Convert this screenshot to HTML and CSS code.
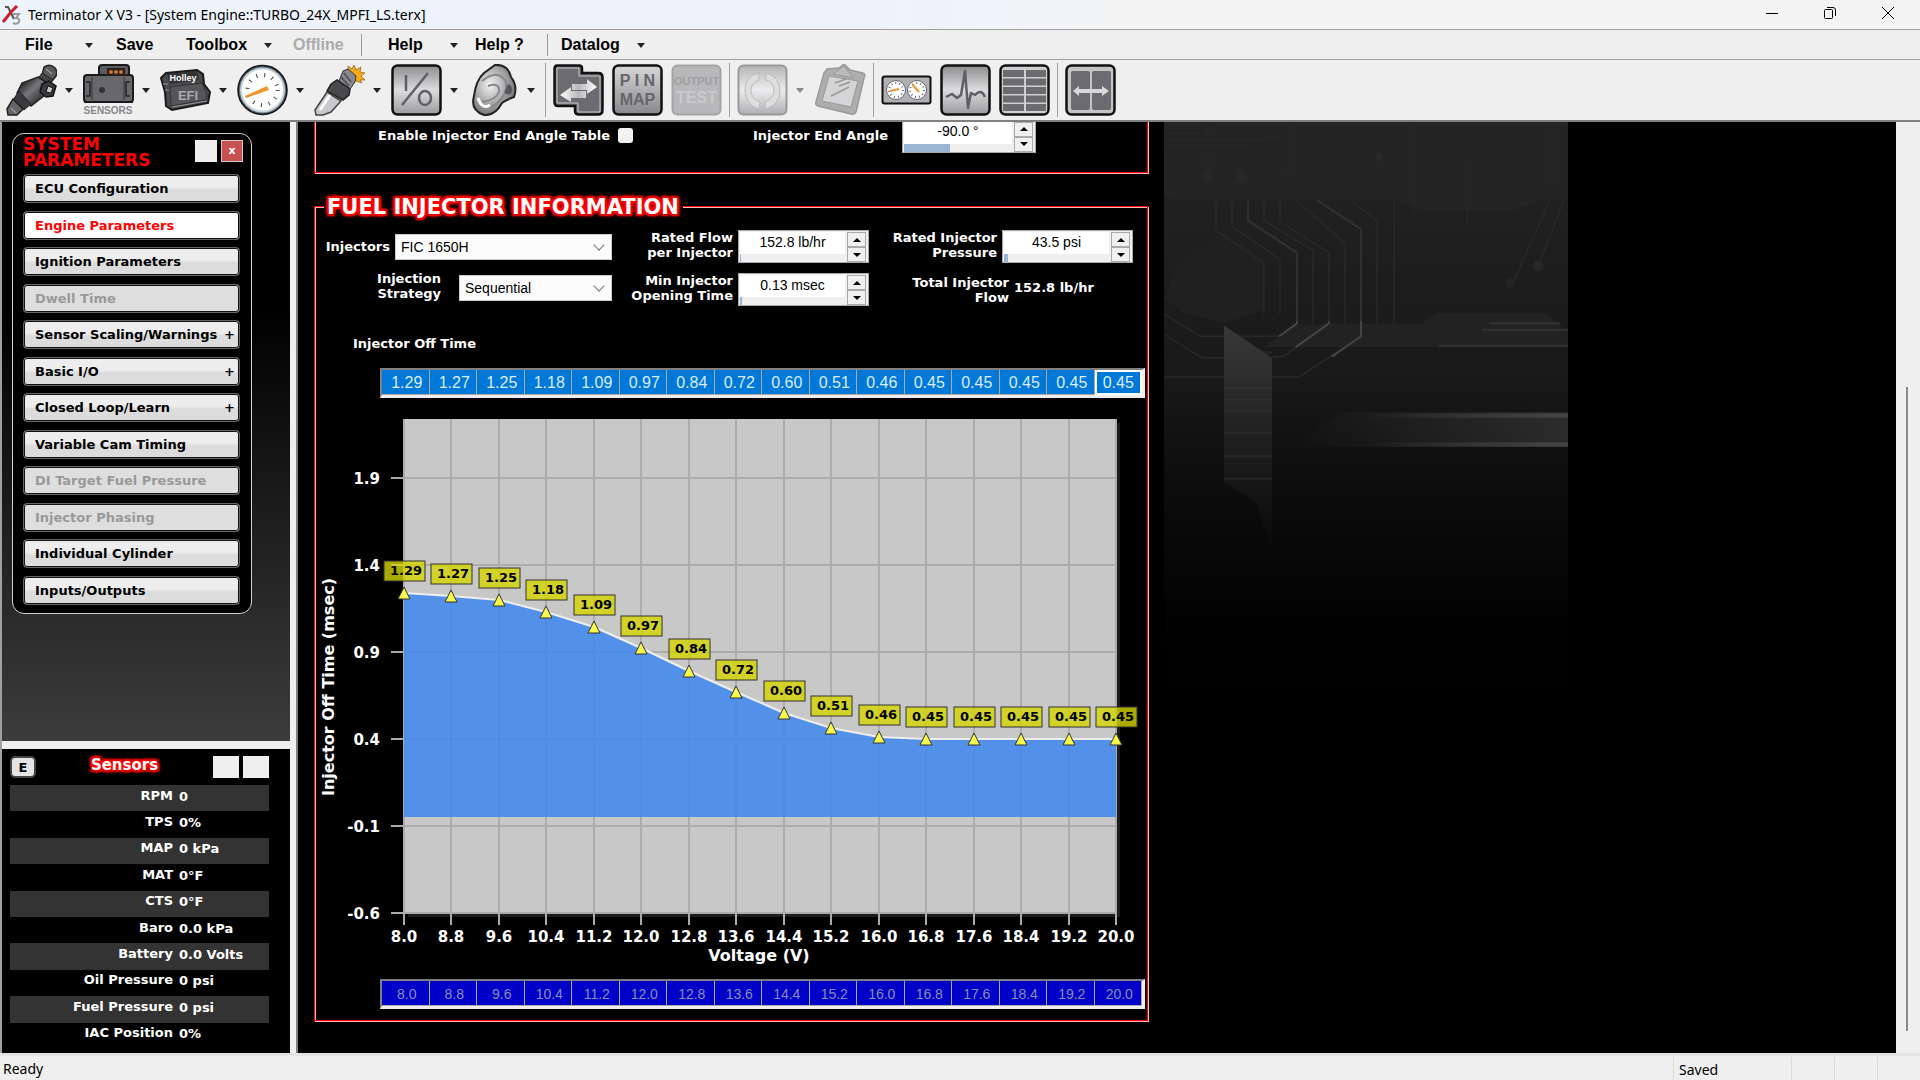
FILE: index.html
```html
<!DOCTYPE html>
<html lang="en">
<head>
    <meta charset="UTF-8">
    <meta name="viewport" content="width=device-width, initial-scale=1.0">
    <title>Terminator X V3</title>
    <link rel="stylesheet" href="styles.css">
</head>
<body>
    <header class="titlebar">
        <svg class="app-icon" width="20" height="20" viewBox="0 0 20 20">
            <path d="M3 2 L6 2 L12 14" fill="none" stroke="#555" stroke-width="2"/>
            <path d="M15 1 L9 7 L1 17" fill="none" stroke="#c8202c" stroke-width="3"/>
            <path d="M11 9 h6 l-3 4 q4 0 3 4 q-2 3 -6 1" fill="none" stroke="#999" stroke-width="2"/>
        </svg>
        <h1>Terminator X V3 - [System Engine::TURBO_24X_MPFI_LS.terx]</h1>
        <div class="window-buttons">
            <button aria-label="Minimize"><svg width="14" height="14" viewBox="0 0 14 14"><path d="M1 7.500H13"/></svg></button>
            <button aria-label="Restore"><svg width="14" height="14" viewBox="0 0 14 14"><rect x="1.500" y="3.500" width="8" height="9" rx="1"/><path d="M4 1.500h6q2.500 0 2.500 2.500v6"/></svg></button>
            <button aria-label="Close"><svg width="14" height="14" viewBox="0 0 14 14"><path d="M1 1L13 13M13 1L1 13"/></svg></button>
        </div>
    </header>

    <nav class="menubar">
        <button class="menu menu-file">File <i class="caret"></i></button>
        <button class="menu menu-save">Save</button>
        <button class="menu menu-toolbox">Toolbox <i class="caret"></i></button>
        <button class="menu menu-offline" disabled>Offline</button>
        <span class="menu-sep"></span>
        <button class="menu menu-help">Help <i class="caret"></i></button>
        <button class="menu menu-help2">Help ?</button>
        <span class="menu-sep"></span>
        <button class="menu menu-datalog">Datalog <i class="caret"></i></button>
    </nav>

    <!-- shared gradients for the toolbar icons -->
    <svg class="defs" width="0" height="0">
        <defs>
            <linearGradient id="metal" x1="0" y1="0" x2="0" y2="1">
                <stop offset="0" stop-color="#8c8c8e"/><stop offset=".5" stop-color="#dcdcde"/><stop offset="1" stop-color="#9a9a9e"/>
            </linearGradient>
            <linearGradient id="metal-down" x1="0" y1="0" x2="0" y2="1">
                <stop offset="0" stop-color="#d8d8da"/><stop offset="1" stop-color="#88888c"/>
            </linearGradient>
            <linearGradient id="faded" x1="0" y1="0" x2="0" y2="1">
                <stop offset="0" stop-color="#b4b4b6"/><stop offset=".5" stop-color="#ececee"/><stop offset="1" stop-color="#b0b0b4"/>
            </linearGradient>
            <linearGradient id="arrow-light" x1="0" y1="0" x2="1" y2="0">
                <stop offset="0" stop-color="#ffffff"/><stop offset=".5" stop-color="#b8b8ba"/><stop offset="1" stop-color="#ffffff"/>
            </linearGradient>
            <linearGradient id="tube" x1="0" y1="0" x2="1" y2="1">
                <stop offset=".2" stop-color="#2e2e30"/><stop offset=".45" stop-color="#77777b"/><stop offset=".8" stop-color="#2c2c2e"/>
            </linearGradient>
            <radialGradient id="ear" cx=".4" cy=".4" r=".6">
                <stop offset="0" stop-color="#f4f4f4"/><stop offset="1" stop-color="#77777a"/>
            </radialGradient>
        </defs>
    </svg>

    <div class="toolbar">
        <button class="tool dropdown" aria-label="Injector">
            <svg width="51" height="52" viewBox="0 0 51 52">
                <path d="M38 3 Q44 -1 49 4 Q52 8 50 12 L46 17 L36 12 Z" fill="#5a5a5e" stroke="#222" stroke-width="1.500"/>
                <path d="M36 9 L47 16 L42 22 L31 16 Z" fill="#444" stroke="#222"/>
                <path d="M32 13 L43 20 L39 31 L25 42 L11 29 L16 19 Z" fill="url(#tube)" stroke="#222" stroke-width="1.500"/>
                <path d="M13 27 L25 40 L18 46 L7 36 Z" fill="#3a3a3c" stroke="#222"/>
                <path d="M7 35 L17 45 L11 51 L2 51 L1 45 Z" fill="#66666a" stroke="#222" stroke-width="1.500"/>
                <path d="M36 20 L43 17 L50 22 L47 32 L40 33 L34 28 Z" fill="#3a3a3c" stroke="#111" stroke-width="1.500"/>
                <path d="M42 22 L47 24 L45 29 L40 28 Z" fill="#c8c8cc" stroke="#111"/>
                <path d="M40 5 L46 10 M5 44 L10 49" stroke="#9a9a9e" stroke-width="1.500"/>
            </svg>
            <i class="caret"></i>
        </button>
        <button class="tool dropdown" aria-label="Sensors">
            <svg width="51" height="52" viewBox="0 0 51 52">
                <path d="M2 12 h14 v-8 q0 -3 3 -3 h24 q3 0 3 3 v8 h3 v26 h-47 z" fill="#5c5c60" stroke="#1a1a1a" stroke-width="2"/>
                <rect x="1" y="11" width="49" height="27" rx="3" fill="#68686c" stroke="#1a1a1a" stroke-width="2"/>
                <rect x="24" y="4" width="18" height="8" fill="#2a2018"/>
                <circle cx="28" cy="8" r="2" fill="#c8723c"/><circle cx="33" cy="8" r="2" fill="#c8723c"/><circle cx="38" cy="8" r="2" fill="#c8723c"/>
                <path d="M3 18 h4 v14 h-4 M47 18 h-4 v14 h4" fill="none" stroke="#222" stroke-width="1.500"/>
                <path d="M9 13 V36 M41 13 V36" stroke="#45454a" stroke-width="1.500"/>
                <circle cx="19" cy="26" r="3" fill="#333"/>
                <text x="25" y="50" class="ico-sensors">SENSORS</text>
            </svg>
            <i class="caret"></i>
        </button>
        <button class="tool dropdown" aria-label="EFI">
            <svg width="51" height="52" viewBox="0 0 51 52">
                <path d="M1 14 L6 9 L37 6 L43 10 L44 20 L50 28 L48 39 L12 46 L6 42 L5 28 Z" fill="#4a4a4e" stroke="#1a1a1a" stroke-width="2"/>
                <path d="M7 10 L37 7 L39 16 L10 20 Z" fill="#333"/>
                <text x="23" y="17" class="ico-brand">Holley</text>
                <path d="M10 23 L42 19 L47 30 L46 36 L11 42 Z" fill="#55555a" stroke="#333"/>
                <text x="28" y="36" class="ico-efi">EFI</text>
                <path d="M3 20 L8 20 M5 26 L9 26 M12 43 L47 37" stroke="#999" stroke-width="1"/>
            </svg>
            <i class="caret"></i>
        </button>
        <button class="tool dropdown" aria-label="Gauges">
            <svg width="51" height="52" viewBox="0 0 51 52">
                <circle cx="25.500" cy="26" r="24.500" fill="#5a6670" stroke="#111" stroke-width="1.500"/>
                <circle cx="25.500" cy="26" r="21.500" fill="#fff" stroke="#c8d4dc" stroke-width="2"/>
                <circle cx="25.500" cy="26" r="15" fill="none" stroke="#444" stroke-width="4" stroke-dasharray="1 7"/>
                <path d="M8 32 L30 22 L32 26 L9 34 Z" fill="#f0962c"/>
            </svg>
            <i class="caret"></i>
        </button>
        <button class="tool dropdown" aria-label="Ignition">
            <svg width="51" height="52" viewBox="0 0 51 52">
                <path d="M34 2 L38 5 L40 1 L42 6 L47 3 L46 8 L51 9 L47 12 L51 16 L46 16 L48 19 L42 17 L34 12 Z" fill="#f5a81c" stroke="#8a6010" stroke-width=".7"/>
                <path d="M29 7 L34 5 L42 12 L41 18 L36 25 L25 17 Z" fill="#8a8a8e" stroke="#333"/>
                <path d="M30 9 L37 18 M27 13 L35 22" stroke="#55555a" stroke-width="2"/>
                <path d="M17 20 L23 16 L36 25 L35 31 L29 36 L13 27 Z" fill="#4a4a4e" stroke="#222" stroke-width="1.500"/>
                <path d="M13 28 L27 37 L17 48 L9 51 L2 51 L1 46 Z" fill="#c8c8cc" stroke="#444" stroke-width="1.500"/>
                <path d="M16 31 L6 46" stroke="#fff" stroke-width="3"/>
            </svg>
            <i class="caret"></i>
        </button>
        <button class="tool dropdown" aria-label="I/O">
            <svg width="51" height="52" viewBox="0 0 51 52">
                <rect x="1.500" y="1.500" width="48" height="49" rx="5" fill="url(#metal)" stroke="#111" stroke-width="2.500"/>
                <path d="M15 11 V27 M37 9 L11 41" stroke="#606064" stroke-width="2.500"/>
                <ellipse cx="34" cy="34" rx="6" ry="7" fill="none" stroke="#606064" stroke-width="2.500"/>
            </svg>
            <i class="caret"></i>
        </button>
        <button class="tool dropdown" aria-label="Knock">
            <svg width="51" height="52" viewBox="0 0 51 52">
                <g transform="translate(2 0)">
                    <path d="M25 1 Q38 0 41 13 Q48 22 44 33 Q36 36 32 39 Q25 52 14 51 Q0 46 4 32 Q6 16 14 9 Z" fill="url(#ear)" stroke="#222" stroke-width="2"/>
                    <path d="M12 17 Q28 4 36 18 Q38 34 20 44 M18 22 Q30 18 29 28 Q26 36 12 38" fill="none" stroke="#88888c" stroke-width="2"/>
                    <path d="M38 20 q6 2 3 10 q-7 1 -6 -3 z" fill="#55555a"/>
                    <path d="M8 34 Q12 46 20 41" fill="none" stroke="#fff" stroke-width="3"/>
                </g>
            </svg>
            <i class="caret"></i>
        </button>
        <span class="sep"></span>
        <button class="tool" aria-label="Transfer">
            <svg width="51" height="52" viewBox="0 0 51 52">
                <path d="M4 1.500 H26 Q29 1.500 29 4 V9 H45 Q49.500 9 49.500 13 V46 Q49.500 50.500 45 50.500 H26 Q22 50.500 22 47 V42 H5 Q1.500 42 1.500 38 V5 Q1.500 1.500 4 1.500 Z" fill="#6c6c70" stroke="#111" stroke-width="2.500"/>
                <path d="M4 4 H26 V12 H47 V48 H25 V39 H4 Z" fill="none" stroke="#c8c8ca"/>
                <path d="M19 20 H34 V15 L44 23 L34 30 V26 H19 Z M33 27 H18 V23 L7 31 L18 38 V34 H33 Z" fill="url(#arrow-light)"/>
            </svg>
        </button>
        <button class="tool" aria-label="Pin Map">
            <svg width="51" height="52" viewBox="0 0 51 52">
                <rect x="1.500" y="1.500" width="48" height="49" rx="5" fill="url(#metal-down)" stroke="#111" stroke-width="2.500"/>
                <text x="25.500" y="22" class="ico-pin">P I N</text>
                <text x="25.500" y="41" class="ico-pin">MAP</text>
            </svg>
        </button>
        <button class="tool" aria-label="Output Test" disabled>
            <svg width="51" height="52" viewBox="0 0 51 52">
                <rect x="1.500" y="1.500" width="48" height="49" rx="5" fill="#b8b8ba" stroke="#a4a4a4" stroke-width="2"/>
                <text x="25.500" y="21" class="ico-output">OUTPUT</text>
                <text x="25.500" y="39" class="ico-test">TEST</text>
            </svg>
        </button>
        <span class="sep"></span>
        <button class="tool dropdown" aria-label="Sync" disabled>
            <svg width="51" height="52" viewBox="0 0 51 52">
                <rect x="1.500" y="1.500" width="48" height="49" rx="5" fill="url(#faded)" stroke="#999" stroke-width="2"/>
                <path d="M22 9 Q7 13 8 27 Q9 41 22 45 L23 38 Q14 34 14 27 Q14 18 22 16 Z M29 9 Q43 13 43 27 Q43 40 29 45 L28 38 Q37 34 37 27 Q37 18 29 16 Z" fill="#dededf" stroke="#bbb"/>
            </svg>
            <i class="caret"></i>
        </button>
        <button class="tool" aria-label="Clipboard" disabled>
            <svg width="51" height="52" viewBox="0 0 51 52">
                <path d="M12 5 L24 4 L29 0 L35 6 L48 9 Q51 10 49 14 L41 48 Q39 51 36 50 L3 42 Q0 41 1 38 L9 9 Z" fill="#adadaf" stroke="#999" stroke-width="1.500"/>
                <path d="M14 12 L43 17 L36 43 L7 37 Z" fill="#d4d4d6" stroke="#999"/>
                <path d="M18 10 L29 2 L38 14 Z" fill="#bbb" stroke="#999"/>
                <path d="M20 19 L31 15 M24 22 L35 18 M16 32 L34 23" stroke="#999" stroke-width="1.500"/>
            </svg>
        </button>
        <span class="sep"></span>
        <button class="tool" aria-label="Dash">
            <svg width="51" height="52" viewBox="0 0 51 52">
                <rect x="1.500" y="12.500" width="48" height="27" rx="2" fill="#b0b0b2" stroke="#111" stroke-width="2"/>
                <circle cx="15" cy="26" r="9.500" fill="#fff" stroke="#667"/><circle cx="36" cy="26" r="9.500" fill="#fff" stroke="#667"/>
                <circle cx="15" cy="26" r="7" fill="none" stroke="#666" stroke-width="2" stroke-dasharray="1 3"/>
                <circle cx="36" cy="26" r="7" fill="none" stroke="#666" stroke-width="2" stroke-dasharray="1 3"/>
                <path d="M9 27 L18 25 M31 20 L38 28" stroke="#f0962c" stroke-width="2"/>
            </svg>
        </button>
        <button class="tool" aria-label="Signal">
            <svg width="51" height="52" viewBox="0 0 51 52">
                <rect x="1.500" y="1.500" width="48" height="49" rx="5" fill="url(#metal)" stroke="#111" stroke-width="2.500"/>
                <path d="M6 33 L12 30 L17 34 L21 31 L25 7 L28 44 L31 29 L35 31 Q41 24 45 33" fill="none" stroke="#606064" stroke-width="2.500" stroke-linejoin="round"/>
            </svg>
        </button>
        <button class="tool" aria-label="Table">
            <svg width="51" height="52" viewBox="0 0 51 52">
                <rect x="1.500" y="1.500" width="48" height="49" rx="5" fill="#cfcfd1" stroke="#111" stroke-width="2.500"/>
                <path d="M4 9.500 H25 M27 9.500 H47 M4 18 H25 M27 18 H47 M4 26.500 H25 M27 26.500 H47 M4 35 H25 M27 35 H47 M4 43.500 H25 M27 43.500 H47" stroke="#6c6c70" stroke-width="7"/>
            </svg>
        </button>
        <span class="sep"></span>
        <button class="tool" aria-label="Columns">
            <svg width="51" height="52" viewBox="0 0 51 52">
                <rect x="1.500" y="1.500" width="48" height="49" rx="5" fill="#c4c4c6" stroke="#111" stroke-width="2.500"/>
                <rect x="6" y="7" width="19" height="39" rx="2" fill="#6c6c70"/><rect x="27" y="7" width="19" height="39" rx="2" fill="#6c6c70"/>
                <path d="M8 27 L14 22 V25 H37 V22 L44 27 L37 32 V29 H14 V32 Z" fill="#d8d8da"/>
            </svg>
        </button>
    </div>

    <div class="workspace">
        <aside class="left">
            <section class="nav-pane">
                <div class="nav-box">
                    <div class="nav-head">
                        <h2>SYSTEM PARAMETERS</h2>
                        <button class="blank-btn" aria-label="Pin"></button>
                        <button class="close-btn">x</button>
                    </div>
                    <div class="nav-list">
                        <button>ECU Configuration</button>
                        <button class="active">Engine Parameters</button>
                        <button>Ignition Parameters</button>
                        <button disabled>Dwell Time</button>
                        <button>Sensor Scaling/Warnings <b>+</b></button>
                        <button>Basic I/O <b>+</b></button>
                        <button>Closed Loop/Learn <b>+</b></button>
                        <button>Variable Cam Timing</button>
                        <button disabled>DI Target Fuel Pressure</button>
                        <button disabled>Injector Phasing</button>
                        <button>Individual Cylinder</button>
                        <button>Inputs/Outputs</button>
                    </div>
                </div>
            </section>
            <section class="sensor-pane">
                <div class="sensor-head">
                    <button class="edit-btn">E</button>
                    <h2 class="glow">Sensors</h2>
                    <button class="blank-btn" aria-label="Previous"></button>
                    <button class="blank-btn" aria-label="Next"></button>
                </div>
                <table class="sensors">
                    <tr><th>RPM</th><td>0</td></tr>
                    <tr><th>TPS</th><td>0%</td></tr>
                    <tr><th>MAP</th><td>0 kPa</td></tr>
                    <tr><th>MAT</th><td>0°F</td></tr>
                    <tr><th>CTS</th><td>0°F</td></tr>
                    <tr><th>Baro</th><td>0.0 kPa</td></tr>
                    <tr><th>Battery</th><td>0.0 Volts</td></tr>
                    <tr><th>Oil Pressure</th><td>0 psi</td></tr>
                    <tr><th>Fuel Pressure</th><td>0 psi</td></tr>
                    <tr><th>IAC Position</th><td>0%</td></tr>
                </table>
            </section>
        </aside>

        <main class="content">
            <div class="panels">
                <fieldset class="group group-timing">
                    <label class="check">Enable Injector End Angle Table <input type="checkbox"></label>
                    <label for="end-angle">Injector End Angle</label>
                    <div class="spinner spinner-wide">
                        <input id="end-angle" type="text" value="-90.0 °">
                        <div class="bar"><div style="width: 43%"></div></div>
                        <button class="up" aria-label="Up"></button>
                        <button class="down" aria-label="Down"></button>
                    </div>
                </fieldset>

                <fieldset class="group group-injector">
                    <legend class="glow">FUEL INJECTOR INFORMATION</legend>
                    <div class="fields">
                        <div class="field field-injectors">
                            <label for="injectors">Injectors</label>
                            <div class="combo"><select id="injectors"><option>FIC 1650H</option></select></div>
                        </div>
                        <div class="field">
                            <label for="rated-flow">Rated Flow<br>per Injector</label>
                            <div class="spinner">
                                <input id="rated-flow" type="text" value="152.8 lb/hr">
                                <div class="bar"><div style="width: 1%"></div></div>
                                <button class="up" aria-label="Up"></button>
                                <button class="down" aria-label="Down"></button>
                            </div>
                        </div>
                        <div class="field">
                            <label for="rated-pressure">Rated Injector<br>Pressure</label>
                            <div class="spinner">
                                <input id="rated-pressure" type="text" value="43.5 psi">
                                <div class="bar"><div style="width: 4%"></div></div>
                                <button class="up" aria-label="Up"></button>
                                <button class="down" aria-label="Down"></button>
                            </div>
                        </div>
                        <div class="field field-strategy">
                            <label for="strategy">Injection<br>Strategy</label>
                            <div class="combo"><select id="strategy"><option>Sequential</option></select></div>
                        </div>
                        <div class="field">
                            <label for="opening-time">Min Injector<br>Opening Time</label>
                            <div class="spinner">
                                <input id="opening-time" type="text" value="0.13 msec">
                                <div class="bar"><div style="width: 2%"></div></div>
                                <button class="up" aria-label="Up"></button>
                                <button class="down" aria-label="Down"></button>
                            </div>
                        </div>
                        <div class="field field-total">
                            <label for="total-flow">Total Injector<br>Flow</label>
                            <output id="total-flow">152.8 lb/hr</output>
                        </div>
                    </div>

                    <h3>Injector Off Time</h3>
                    <table class="cells off-time"><tr id="off-time-row"></tr></table>
                    <svg id="chart" class="chart" width="831" height="581" viewBox="0 0 831 581"></svg>
                    <table class="cells voltage"><tr id="voltage-row"></tr></table>
                </fieldset>
            </div>

            <svg class="backdrop" width="404" height="600" viewBox="0 0 404 560" preserveAspectRatio="none">
                <defs>
                    <linearGradient id="bg-fade" x1="0" y1="0" x2="0" y2="1">
                        <stop offset="0" stop-color="#242424"/><stop offset=".42" stop-color="#191919"/><stop offset=".58" stop-color="#0e0e0e"/><stop offset=".85" stop-color="#010101"/><stop offset="1" stop-color="#000"/>
                    </linearGradient>
                    <linearGradient id="pillar" x1="0" y1="0" x2="0" y2="1">
                        <stop offset="0" stop-color="#383838"/><stop offset=".5" stop-color="#202020"/><stop offset="1" stop-color="#080808"/>
                    </linearGradient>
                    <linearGradient id="beam" x1="0" y1="0" x2="1" y2="0">
                        <stop offset="0" stop-color="#444" stop-opacity="0"/><stop offset="1" stop-color="#444"/>
                    </linearGradient>
                </defs>
                <rect width="404" height="560" fill="url(#bg-fade)"/>
                <path d="M0 0 H404 V73 H376 L350 82 H255 L236 73 H12 L0 68 Z" fill="#242424"/>
                <path d="M44 0 V50 M130 0 V42 L118 52 M250 0 V85 M303 40 V98 M388 0 V60" fill="none" stroke="#292929"/>
                <path d="M0 8 H36 L52 0 M0 14 H100 M0 20 H120 M0 27 H90" fill="none" stroke="#202020"/>
                <circle cx="43" cy="51" r="5" fill="#282828"/><circle cx="78" cy="51" r="5" fill="#282828"/><circle cx="215" cy="33" r="4" fill="#282828"/>
                <path d="M14 130 L60 102 L100 128 V175 L60 188 L20 178 L0 165 Z" fill="#202020"/>
                <g fill="none" stroke="#282828" stroke-width="1.500">
                    <path d="M52 73 V101 L100 132 V180"/>
                    <path d="M68 73 V98 L116 128 V180"/>
                    <path d="M84 73 V92 L133 122 V188 L115 200"/>
                    <path d="M100 73 V92 L149 120 V188"/>
                    <path d="M116 73 V93 L165 122 V188 L119 219 H109"/>
                    <path d="M132 73 L181 113 V188"/>
                    <path d="M153 73 L197 100 V200 L135 238 H0"/>
                    <path d="M190 76 L213 92 V188 M230 73 V188"/>
                    <path d="M0 179 L36 200 H115 M0 198 L38 220 H60"/>
                    <path d="M386 73 L349 150 M400 73 L376 130"/>
                </g>
                <path d="M84 73 V92 L133 122 V188 M153 73 L197 100 V200" fill="none" stroke="#303030" stroke-width="2"/>
                <circle cx="374" cy="134" r="5" fill="#282828"/><circle cx="346" cy="150" r="5" fill="#242424"/>
                <path d="M170 188 H258 L272 178 H382 L404 196 V210 H100 L130 190 Z" fill="#222"/>
                <path d="M133 186 V188 L115 200 M165 186 V188 L132 210 M197 186 V200 L168 219" fill="none" stroke="#444" stroke-width="2"/>
                <path d="M325 188 H396 M318 194 H404 M275 209 H404" stroke="#303030" stroke-width="2"/>
                <path d="M60 190 L108 220 V400 L92 355 L60 336 Z" fill="url(#pillar)"/>
                <path d="M60 215 H108 M60 226 H108 M60 237 H108 M60 248 H108 M60 259 H108 M60 270 H108 M60 290 H108 M60 312 H108 M60 333 H108" stroke="#343434" stroke-opacity=".5" stroke-width="2"/>
                <path d="M176 271 H404 V303 H126 Z" fill="url(#beam)" fill-opacity=".5"/>
                <rect x="200" y="272" width="204" height="4" fill="url(#beam)"/>
                <rect x="200" y="299" width="204" height="4" fill="url(#beam)"/>
            </svg>
        </main>
        <div class="scrollbar"><div class="thumb"></div></div>
    </div>

    <footer class="statusbar">
        <span class="status-main">Ready</span>
        <span class="status-saved">Saved</span>
        <span class="status-cell"></span>
        <span class="status-cell"></span>
        <span class="status-cell"></span>
    </footer>

    <script>
        const offTimes = [1.29, 1.27, 1.25, 1.18, 1.09, 0.97, 0.84, 0.72, 0.60, 0.51, 0.46, 0.45, 0.45, 0.45, 0.45, 0.45];
        const volts = offTimes.map((_, i) => 8 + i * 0.8);

        // Plot area inside the chart
        const plot = { left: 89, right: 801, top: 21, bottom: 515, zero: 419 };
        const unit = 174;

        const px = i => Math.round(plot.left + i * (plot.right - plot.left) / 15);
        const py = v => Math.round(plot.zero - v * unit);

        // Fill the two value rows
        document.getElementById('off-time-row').innerHTML =
            offTimes.map(v => `<td>${v.toFixed(2)}</td>`).join('');
        document.getElementById('voltage-row').innerHTML =
            volts.map(v => `<td>${v.toFixed(1)}</td>`).join('');

        function drawChart() {
            const w = plot.right - plot.left;
            const h = plot.bottom - plot.top;
            let out = '';
            out += `<rect class="plot-shadow" x="${plot.left + 4}" y="${plot.top + 4}" width="${w}" height="${h}"/>`;
            out += `<rect class="plot-bg" x="${plot.left}" y="${plot.top}" width="${w}" height="${h}"/>`;

            // Grid, ticks and axis labels
            volts.forEach((v, i) => {
                out += `<path class="grid" d="M${px(i)} ${plot.top}V${plot.bottom}"/>`;
                out += `<path class="tick" d="M${px(i)} ${plot.bottom}V${plot.bottom + 12}"/>`;
                out += `<text class="axis mid" x="${px(i)}" y="544">${v.toFixed(1)}</text>`;
            });
            [1.9, 1.4, 0.9, 0.4, -0.1, -0.6].forEach((v, i) => {
                const y = 80 + i * 87;
                out += `<path class="grid" d="M${plot.left} ${y}H${plot.right}"/>`;
                out += `<path class="tick" d="M${plot.left - 13} ${y}H${plot.left}"/>`;
                out += `<text class="axis end" x="65" y="${y + 6}">${v.toFixed(1)}</text>`;
            });

            // Area and line
            const line = offTimes.map((v, i) => `${px(i)} ${py(v)}`).join('L');
            out += `<path class="area" d="M${line}V${plot.zero}H${plot.left}Z"/>`;
            out += `<path class="line" d="M${line}"/>`;

            // Markers and value tags
            offTimes.forEach((v, i) => {
                const x = px(i), y = py(v);
                out += `<path class="marker" d="M${x} ${y - 6}L${x + 6} ${y + 6}H${x - 6}Z"/>`;
                out += `<rect class="tag" x="${x - 20}" y="${y - 32}" width="41" height="20"/>`;
                out += `<text class="tag-text" x="${x + 2}" y="${y - 18}">${v.toFixed(2)}</text>`;
            });

            out += `<text class="axis-title mid" x="444" y="563">Voltage (V)</text>`;
            out += `<text class="axis-title mid" transform="translate(19 289) rotate(-90)">Injector Off Time (msec)</text>`;
            document.getElementById('chart').innerHTML = out;
        }

        drawChart();
    </script>
</body>
</html>
```

FILE: styles.css
```css
* {
    box-sizing: border-box;
}

body {
    margin: 0;
    height: 100vh;
    display: flex;
    flex-direction: column;
    overflow: hidden;
    background-color: #efefef;
    color: #000;
    font-family: "Liberation Sans", Arial, sans-serif;
    font-size: 14px;
}

button {
    padding: 0;
    border: none;
    background: none;
    color: inherit;
    font: inherit;
}

h1, h2, h3 {
    margin: 0;
    font-size: inherit;
}

.defs {
    position: absolute;
}

.caret {
    display: inline-block;
    border: 4px solid transparent;
    border-top: 5px solid #222;
    border-bottom: none;
}

/* Title bar */
.titlebar {
    height: 30px;
    display: flex;
    align-items: center;
    padding: 0 3px 0 2px;
    background: linear-gradient(90deg, #edf3fb, #eef3fb 45%, #f3f3f3 60%);
    border-bottom: 1px solid #a0a0a0;
}

.titlebar h1 {
    flex: 1;
    margin-left: 6px;
    font-family: "Noto Sans", sans-serif;
    font-size: 14px;
    font-weight: 400;
}

.window-buttons {
    display: flex;
}

.window-buttons button {
    width: 58px;
    height: 28px;
}

.window-buttons svg {
    fill: none;
    stroke: #000;
}

/* Menu bar */
.menubar {
    height: 30px;
    display: flex;
    align-items: center;
    padding: 1px 0 0 25px;
    border-bottom: 1px solid #a0a0a0;
}

.menu {
    display: flex;
    align-items: center;
    justify-content: space-between;
    font-size: 16px;
    font-weight: 700;
    text-align: left;
}

.menu-file { width: 68px; margin-right: 23px; }
.menu-save { width: 70px; }
.menu-toolbox { width: 86px; margin-right: 21px; }
.menu-offline { width: 68px; color: #aaa; }
.menu-help { width: 70px; margin: 0 17px 0 26px; }
.menu-help2 { width: 72px; }
.menu-datalog { width: 84px; margin-left: 13px; }

.menu-sep {
    width: 1px;
    height: 22px;
    background-color: #999;
}

/* Toolbar */
.toolbar {
    height: 60px;
    display: flex;
    align-items: center;
    padding-left: 6px;
}

.tool {
    display: flex;
    align-items: center;
}

.dropdown {
    width: 77px;
    gap: 8px;
}

.tool:disabled .caret {
    border-top-color: #888;
}

.sep {
    width: 1px;
    height: 54px;
    margin: 0 7px;
    background-color: #a0a0a0;
}

.tool + .tool:not(.dropdown) {
    margin-left: 8px;
}

.dropdown + .tool:not(.dropdown) {
    margin-left: 1px;
}

.dropdown + .sep {
    margin-left: 0;
}

.tool text {
    font-weight: 700;
    text-anchor: middle;
    fill: #66666a;
}

.tool .ico-sensors { font-size: 10px; fill: #88888c; }
.tool .ico-brand { font-size: 9px; fill: #fff; }
.tool .ico-efi { font-size: 13px; fill: #aaa; }
.tool .ico-pin { font-size: 16px; }
.tool .ico-output { font-size: 11px; fill: #a0a0a2; }
.tool .ico-test { font-size: 16px; fill: #cacacc; }

/* Workspace */
.workspace {
    flex: 1;
    min-height: 0;
    display: flex;
    border-top: 2px solid #808080;
}

.left {
    width: 296px;
    display: flex;
    flex-direction: column;
    gap: 8px;
    padding-right: 6px;
    border-left: 2px solid #a0a0a0;
    flex-shrink: 0;
}

.nav-pane {
    flex: 1;
    padding: 11px 10px;
    background: linear-gradient(#000 30%, #3c3c3c);
}

.nav-box {
    width: 240px;
    height: 481px;
    padding: 2px 11px 8px 10px;
    border: 1px solid #d0d0d0;
    border-radius: 12px;
    background-color: #000;
    display: flex;
    flex-direction: column;
}

.nav-head {
    display: flex;
    align-items: flex-start;
    gap: 4px;
    height: 38px;
    margin-right: -3px;
    flex-shrink: 0;
}

.nav-head h2 {
    flex: 1;
    color: #f00;
    font-family: "DejaVu Sans", Verdana, sans-serif;
    font-size: 17px;
    font-weight: 700;
    line-height: 16px;
}

.blank-btn, .close-btn {
    width: 22px;
    height: 22px;
    background-color: #efefef;
}

.nav-head button {
    margin-top: 4px;
}

.close-btn {
    background-color: #c75050;
    border: 1px solid #ccc;
    color: #fff;
    font-family: "DejaVu Sans", Verdana, sans-serif;
    font-size: 11px;
    font-weight: 700;
    line-height: 16px;
}

.nav-list {
    flex: 1;
    display: flex;
    flex-direction: column;
    justify-content: space-between;
}

.nav-list button {
    height: 29px;
    padding: 0 4px 0 11px;
    display: flex;
    align-items: center;
    justify-content: space-between;
    border: 1px solid #666;
    border-radius: 4px;
    box-shadow: inset 0 0 0 1px #111;
    background: linear-gradient(#ededed 45%, #dcdcdc 55%);
    font-family: "DejaVu Sans", Verdana, sans-serif;
    font-size: 13px;
    font-weight: 700;
    white-space: nowrap;
}

.nav-list .active {
    background: #fff;
    color: #f00;
}

.nav-list button:disabled {
    background: #dedede;
    color: #999;
}

/* Sensors */
.sensor-pane {
    height: 304px;
    padding: 7px 21px 0 8px;
    background-color: #000;
    color: #fff;
    font-family: "DejaVu Sans", Verdana, sans-serif;
    font-weight: 700;
    font-size: 13px;
}

.sensor-head {
    display: flex;
    gap: 4px;
    height: 29px;
}

.edit-btn {
    width: 26px;
    height: 22px;
    border: 2px solid #444;
    border-radius: 5px;
    background-color: #e4e4e4;
    color: #000;
}

.glow {
    text-shadow: 0 0 2px #f00, 0 0 3px #f00, 0 0 4px #f00, 0 0 5px #f00, 2px 2px 2px #f00, -2px -2px 2px #f00, 2px -2px 2px #f00, -2px 2px 2px #f00;
}

.sensor-head h2 {
    flex: 1;
    font-size: 15px;
    line-height: 18px;
    text-align: center;
}

.sensor-head .blank-btn {
    width: 26px;
}

.sensors {
    width: 100%;
    height: 264px;
    border-collapse: collapse;
}

.sensors tr:nth-child(odd) {
    background-color: #333;
}

.sensors th, .sensors td {
    padding: 0 0 4px 6px;
    text-align: left;
}

.sensors th {
    width: 163px;
    padding: 0 0 6px;
    text-align: right;
}

/* Main content */
.content {
    flex: 1;
    display: flex;
    min-width: 0;
    overflow: hidden;
    border-left: 2px solid #808080;
    background-color: #000;
    color: #fff;
    font-family: "DejaVu Sans", Verdana, sans-serif;
    font-size: 13px;
    font-weight: 700;
}

.panels {
    width: 866px;
    flex-shrink: 0;
    padding: 0 16px;
}

.group {
    margin: 0;
    padding: 0;
    min-width: 0;
    border: 1px solid #f00;
    box-shadow: 1px 1px 0 #fbb, inset 1px 1px 0 #fbb;
}

.group-timing {
    display: flex;
    align-items: center;
    height: 56px;
    margin-top: -5px;
    padding: 0 0 18px 63px;
}

.group-timing label {
    padding-bottom: 2px;
}

.check {
    display: flex;
    align-items: center;
    gap: 8px;
    width: 375px;
}

.check input {
    appearance: none;
    width: 15px;
    height: 15px;
    margin: 0;
    border-radius: 3px;
    background-color: #f2f2f2;
}

.group-timing > label + label {
    width: 149px;
}

.group-injector {
    margin-top: 20px;
    padding: 0 0 11px;
}

.group-injector legend {
    margin-left: 9px;
    padding: 2px 4px 0 3px;
    background-color: #000;
    font-size: 21px;
    line-height: 24px;
}

.fields {
    display: grid;
    grid-template-columns: 288px 257px 264px;
    gap: 10px 0;
    padding: 11px 0 0 9px;
}

.field {
    display: flex;
    align-items: center;
    justify-content: flex-end;
    gap: 5px;
    height: 33px;
}

.field label {
    padding-bottom: 4px;
    line-height: 15px;
    text-align: right;
}

.field-injectors label {
    padding: 0;
}

.field-strategy {
    gap: 18px;
    padding-bottom: 4px;
}

.field-total {
    justify-content: flex-start;
}

.field-total label {
    width: 140px;
    padding: 0;
}

.field-total output {
    padding-bottom: 5px;
}

.combo {
    position: relative;
    width: 217px;
}

.field-strategy .combo {
    width: 153px;
}

.combo::after {
    content: "";
    position: absolute;
    right: 9px;
    top: 7px;
    width: 7px;
    height: 7px;
    border: solid #777;
    border-width: 0 1px 1px 0;
    transform: rotate(45deg);
}

.combo select {
    display: block;
    appearance: none;
    width: 100%;
    height: 26px;
    padding: 0 5px;
    border: 1px solid #ccc;
    border-radius: 0;
    background-color: #fcfcfc;
    color: #000;
    font-family: "Liberation Sans", Arial, sans-serif;
    font-size: 14px;
}

/* Spinner: value over a bar, with up and down at the right */
.spinner {
    width: 131px;
    height: 33px;
    padding: 1px;
    display: grid;
    grid-template-columns: 1fr 22px;
    grid-template-rows: 15px 7px 8px;
    border: 1px solid #aaa;
    background-color: #efefef;
}

.spinner-wide {
    width: 134px;
}

.spinner input {
    grid-row: 1 / 3;
    width: 100%;
    padding: 0 0 3px;
    border: none;
    background-color: #fff;
    color: #000;
    font-family: "Liberation Sans", Arial, sans-serif;
    font-size: 14px;
    text-align: center;
}

.spinner .bar {
    grid-row: 3;
    grid-column: 1;
}

.bar div {
    height: 100%;
    background-color: #9ab4d4;
}

.spinner button {
    display: flex;
    align-items: center;
    justify-content: center;
    margin: 0 1px 0 2px;
    border: 1px solid #aaa;
    background-color: #f0f0f0;
}

.spinner .up {
    grid-column: 2;
    grid-row: 1;
}

.spinner .down {
    grid-column: 2;
    grid-row: 2 / 4;
}

.up::before, .down::before {
    content: "";
    border: 4px solid transparent;
    border-bottom: 4px solid #000;
    border-top: none;
}

.down::before {
    border-top: 4px solid #000;
    border-bottom: none;
}

.group-injector h3 {
    margin: 29px 0 15px 38px;
    line-height: 18px;
}

/* Value rows */
.cells {
    width: 765px;
    height: 30px;
    margin-left: 65px;
    table-layout: fixed;
    border-collapse: separate;
    border-spacing: 0;
    border: 2px solid;
    border-color: #808080 #eee #eee #808080;
    border-right-width: 3px;
    border-bottom-width: 3px;
    font-family: "Liberation Sans", Arial, sans-serif;
    font-size: 16px;
    font-weight: 400;
    text-align: center;
}

.cells td {
    padding: 1px 0 0 3px;
    background-color: #0078d7;
    color: #dcecfa;
    border-right: 1px solid #aaa;
    border-bottom: 1px solid #aaa;
}

.off-time td:last-child {
    padding: 0;
    border: 2px solid #fff;
}

.voltage {
    font-size: 14px;
}

.voltage td {
    background-color: #0000c8;
    color: #8c8cb0;
}

/* Chart */
.chart {
    display: block;
}

.plot-shadow { fill: #1c1c1c; }
.plot-bg { fill: #c8c8c8; }
.grid { stroke: #acacac; stroke-width: 2; }
.tick { stroke: #aaa; stroke-width: 2; }
.area { fill: #3c86f0; fill-opacity: .84; }
.line { fill: none; stroke: #eee; stroke-width: 2; }
.marker { fill: #f8f84c; stroke: #333; }
.tag { fill: #d4d400; fill-opacity: .8; stroke: #333; }

.axis {
    fill: #fff;
    font-size: 15px;
}

.axis-title {
    fill: #fff;
    font-size: 16px;
}

.mid { text-anchor: middle; }
.end { text-anchor: end; }

.tag-text {
    fill: #000;
    font-size: 13px;
    text-anchor: middle;
}

.scrollbar {
    width: 24px;
    flex-shrink: 0;
    padding: 265px 0 22px 10px;
}

.thumb {
    width: 2px;
    height: 100%;
    background-color: #8a8a8a;
}

/* Status bar */
.statusbar {
    height: 27px;
    display: flex;
    align-items: center;
    padding-top: 1px;
    border-top: 3px solid #e4e4e4;
    font-family: "Noto Sans", sans-serif;
    font-size: 14px;
    line-height: 26px;
}

.status-main {
    flex: 1;
    padding-left: 3px;
}

.statusbar span + span {
    height: 100%;
    border-left: 1px solid #dadada;
}

.status-saved {
    width: 118px;
    padding-left: 5px;
}

.status-cell {
    width: 43px;
}
```
